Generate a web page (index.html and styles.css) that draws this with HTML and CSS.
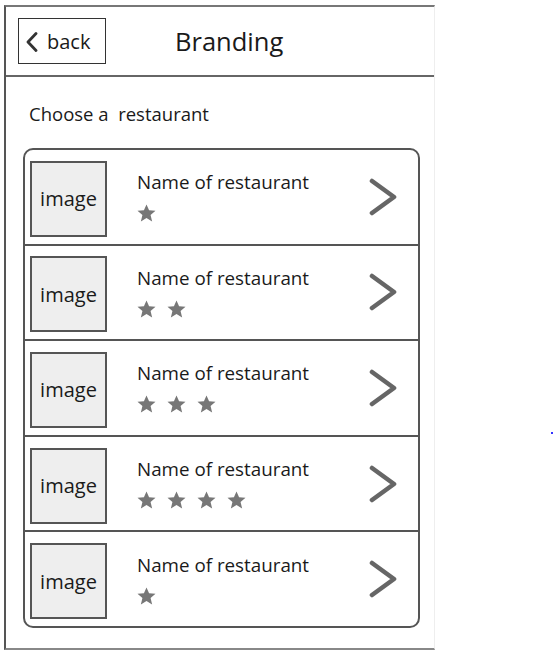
FILE: index.html
```html
<!DOCTYPE html>
<html lang="en">
<head>
    <meta charset="UTF-8">
    <meta name="viewport" content="width=device-width, initial-scale=1.0">
    <title>Branding</title>
    <link rel="stylesheet" href="styles.css">
</head>
<body>
    <div class="phone">
<!--  header with back button  -->
  <div class="header">
    <span class="back">
      <svg class="back-icon" width="12" height="20" viewBox="0 0 12 20"><polyline points="10,1.5 2,10 10,18.5" fill="none" stroke="#333" stroke-width="2.8" stroke-linecap="round" stroke-linejoin="round"/></svg>
      back
    </span>
    <h1 class="title">Branding</h1>
  </div>
  <div class="content">
    <p class="label">Choose a &nbsp;restaurant</p>
<!--  list of restaurants  -->
    <div class="list">
      <div class="row">
        <div class="thumb">image</div>
        <div class="info">
          <div class="name">Name of restaurant</div>
          <div class="stars" data-count="1"></div>
        </div>
        <svg class="chev" width="30" height="38" viewBox="0 0 30 38"><polyline points="4,3 26,19 4,35" fill="none" stroke="#666" stroke-width="4.6" stroke-linecap="round" stroke-linejoin="round"/></svg>
      </div>
      <div class="row">
        <div class="thumb">image</div>
        <div class="info">
          <div class="name">Name of restaurant</div>
          <div class="stars" data-count="2"></div>
        </div>
        <svg class="chev" width="30" height="38" viewBox="0 0 30 38"><polyline points="4,3 26,19 4,35" fill="none" stroke="#666" stroke-width="4.6" stroke-linecap="round" stroke-linejoin="round"/></svg>
      </div>
      <div class="row">
        <div class="thumb">image</div>
        <div class="info">
          <div class="name">Name of restaurant</div>
          <div class="stars" data-count="3"></div>
        </div>
        <svg class="chev" width="30" height="38" viewBox="0 0 30 38"><polyline points="4,3 26,19 4,35" fill="none" stroke="#666" stroke-width="4.6" stroke-linecap="round" stroke-linejoin="round"/></svg>
      </div>
      <div class="row">
        <div class="thumb">image</div>
        <div class="info">
          <div class="name">Name of restaurant</div>
          <div class="stars" data-count="4"></div>
        </div>
        <svg class="chev" width="30" height="38" viewBox="0 0 30 38"><polyline points="4,3 26,19 4,35" fill="none" stroke="#666" stroke-width="4.6" stroke-linecap="round" stroke-linejoin="round"/></svg>
      </div>
      <div class="row">
        <div class="thumb">image</div>
        <div class="info">
          <div class="name">Name of restaurant</div>
          <div class="stars" data-count="1"></div>
        </div>
        <svg class="chev" width="30" height="38" viewBox="0 0 30 38"><polyline points="4,3 26,19 4,35" fill="none" stroke="#666" stroke-width="4.6" stroke-linecap="round" stroke-linejoin="round"/></svg>
      </div>
    </div>
  </div>
</div>
<span class="dot"></span>
    <script>
        // fill each rating with the right number of stars
var star = '<svg width="19" height="18" viewBox="0 0 24 23"><polygon points="12,0.5 15.3,8 23.5,8.6 17.2,14 19.2,22.5 12,18 4.8,22.5 6.8,14 0.5,8.6 8.7,8" fill="#777"/></svg>';
var ratings = document.querySelectorAll('.stars');
for(var i = 0; i < ratings.length; i++) {
	var n = parseInt(ratings[i].getAttribute('data-count'));
	var html = '';
	for(var j = 0; j < n; j++) html += star;
	ratings[i].innerHTML = html;
}
    </script>
</body>
</html>
```

FILE: styles.css
```css
body {
margin:0;
padding:0;
background:#fff;
font-family:"Open Sans", "Noto Sans", sans-serif;
color:#1a1a1a;
}

/* outer wireframe */
.phone {
width:428px;
height:641px;
margin:5px 0 0 4px;
border-top:2px solid #777;
border-left:2px solid #555;
border-bottom:2px solid #888;
border-right:1px solid #eee;
display:flex;
flex-direction:column;
}

/* top bar */
.header {
height:68px;
flex-shrink:0;
display:flex;
align-items:center;
padding-left:12px;
border-bottom:2px solid #666;
}
.back {
width:88px;
height:46px;
border:1.5px solid #333;
display:flex;
align-items:center;
gap:9px;
padding-left:7px;
box-sizing:border-box;
font-size:20px;
color:#1a1a1a;
}
.back-icon {
margin-top:1px;
}
.title {
margin:0 0 0 69px;
font-size:25.5px;
font-weight:normal;
color:#1a1a1a;
}

/* body */
.content {
flex:1;
display:flex;
flex-direction:column;
padding:0 0 0 17px;
}
.label {
margin:24px 0 0 6px;
font-size:18.5px;
line-height:26px;
}
.list {
width:393px;
height:476px;
margin-top:21px;
border:2px solid #555;
border-radius:10px;
display:flex;
flex-direction:column;
}
.row {
flex:1;
display:flex;
align-items:center;
padding:0 20px 0 5px;
border-bottom:2px solid #555;
}
.row:last-child {
border-bottom:none;
}
.thumb {
width:77px;
height:76px;
box-sizing:border-box;
border:2px solid #555;
background:#eee;
display:flex;
align-items:center;
justify-content:center;
font-size:20px;
margin-top:4px;
}
.info {
flex:1;
padding-left:30px;
}
.name {
font-size:18.8px;
line-height:22px;
}
.stars {
display:flex;
gap:11px;
margin-top:11px;
height:18px;
}
.stars svg {
display:block;
}

/* stray pixel at the side */
.dot {
position:absolute;
left:551px;
top:432px;
width:2px;
height:2px;
background:#33f;
}
```
